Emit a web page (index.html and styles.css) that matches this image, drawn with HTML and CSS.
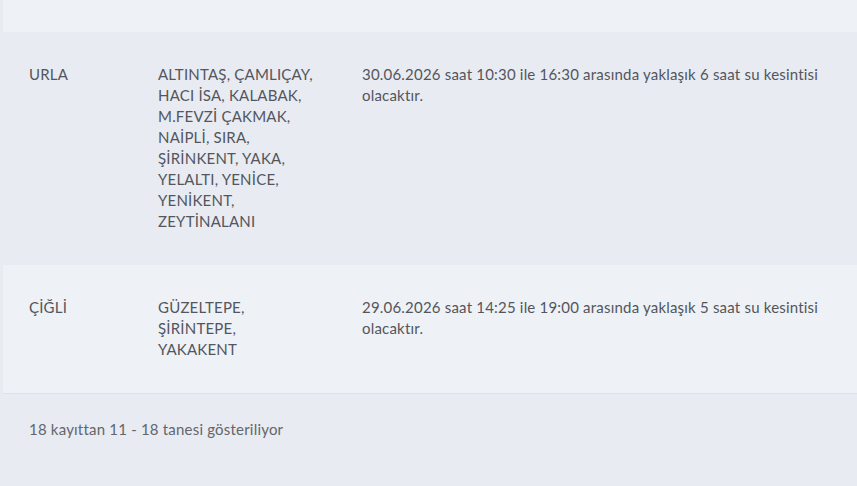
FILE: index.html
```html
<!DOCTYPE html>
<html lang="tr">
<head>
<meta charset="utf-8">
<link rel="stylesheet" href="styles.css">
</head>
<body>
<div class="table">
  <div class="row row-light row-prev"></div>
  <div class="row row-dark">
    <div class="cell c1">URLA</div>
    <div class="cell c2">ALTINTAŞ, ÇAMLIÇAY, HACI İSA, KALABAK, M.FEVZİ ÇAKMAK, NAİPLİ, SIRA, ŞİRİNKENT, YAKA, YELALTI, YENİCE, YENİKENT, ZEYTİNALANI</div>
    <div class="cell c3">30.06.2026 saat 10:30 ile 16:30 arasında yaklaşık 6 saat su kesintisi olacaktır.</div>
  </div>
  <div class="row row-light row-last">
    <div class="cell c1">ÇİĞLİ</div>
    <div class="cell c2">GÜZELTEPE, ŞİRİNTEPE, YAKAKENT</div>
    <div class="cell c3">29.06.2026 saat 14:25 ile 19:00 arasında yaklaşık 5 saat su kesintisi olacaktır.</div>
  </div>
</div>
<div class="info">18 kayıttan 11 - 18 tanesi gösteriliyor</div>
</body>
</html>
```

FILE: styles.css
```css
html, body {
  margin: 0;
  padding: 0;
}
body {
  background: #e8ebf2;
  font-family: Lato, "Noto Sans", sans-serif;
  font-size: 15px;
  letter-spacing: 0.2px;
  line-height: 21px;
  color: #53565c;
  width: 857px;
  height: 486px;
  overflow: hidden;
}
.table {
  margin-left: 3px;
}
.row {
  display: grid;
  grid-template-columns: 129px 204px 1fr;
}
.row-prev {
  height: 32px;
}
.row-light {
  background: #eef1f6;
}
.row-dark {
  background: #e8ebf2;
}
.row-last {
  border-bottom: 1px solid #dde1e8;
}
.cell {
  padding: 32px 26px 33px 26px;
}
.c2 {
  padding-right: 20px;
}
.c3 {
  padding-right: 26px;
}
.info {
  padding: 25px 0 0 29px;
  color: #63666b;
}
```
